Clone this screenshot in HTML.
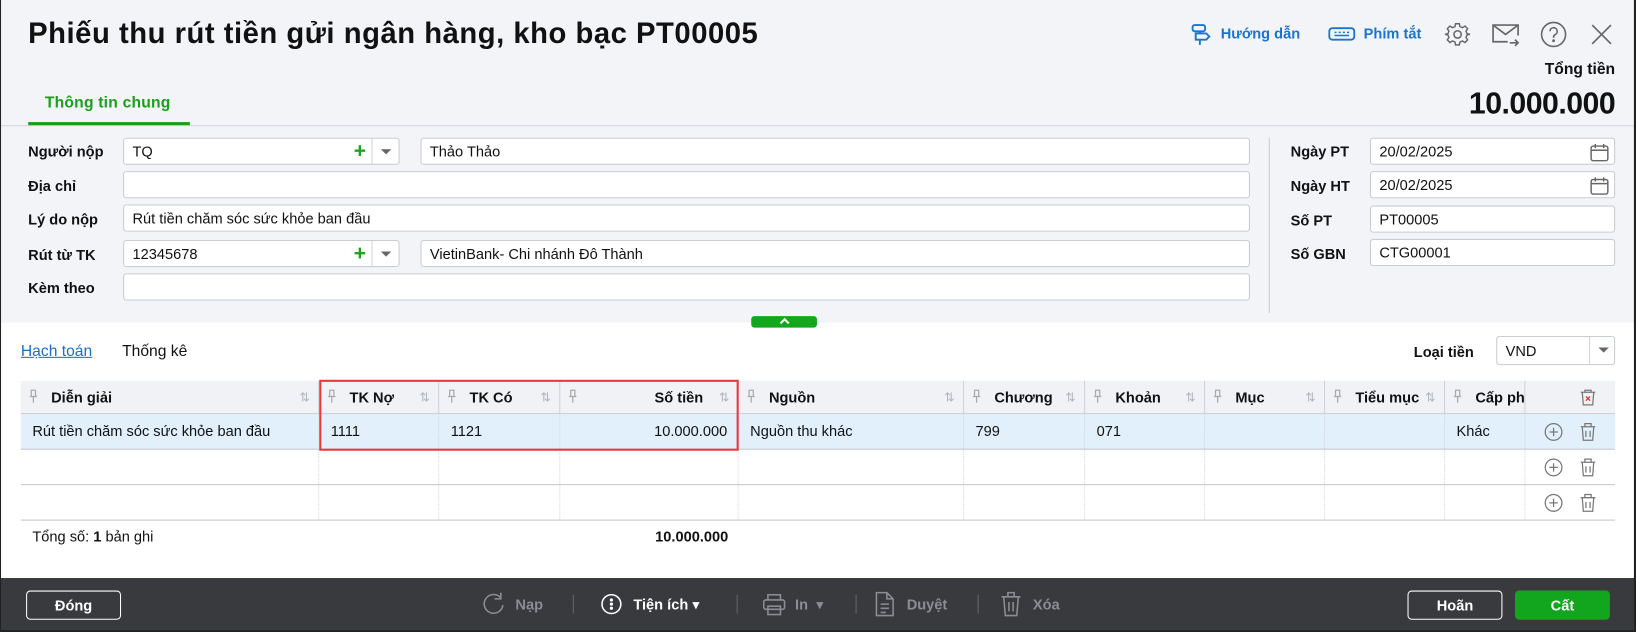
<!DOCTYPE html>
<html><head><meta charset="utf-8">
<style>
*{box-sizing:border-box;margin:0;padding:0}
html,body{width:1636px;height:632px;overflow:hidden;background:#fff}
body{font-family:"Liberation Sans","DejaVu Sans",sans-serif;color:#111;}
#w{position:absolute;left:0;top:0;width:1568px;height:606px;transform:scale(1.04337);transform-origin:0 0;background:#fff;overflow:hidden}
.a{position:absolute}
.t14{font-size:14px}
.b{font-weight:bold}
.inp{position:absolute;background:#fff;border:1px solid #c9ccd3;border-radius:3px;height:26px;font-size:14px;line-height:24px;padding-left:8px;color:#111}
.lbl{position:absolute;font-size:14px;font-weight:bold;color:#111}
.plus{position:absolute;color:#1ea51e;font-size:20px;line-height:22px;font-weight:bold}
.dd{position:absolute;top:0;right:0;width:26px;height:24px;border-left:1px solid #d0d3da}
.dd:after{content:"";position:absolute;left:8px;top:10px;border:5px solid transparent;border-top:5px solid #666;border-bottom:0}
.th{position:absolute;top:0;height:32px;border-right:1px solid #cfd2d9;font-size:14px;font-weight:bold;line-height:32px}
.srt{position:absolute;right:8px;top:0;color:#b0b4bb;font-size:12px;font-weight:normal}
.row{position:absolute;left:20px;width:1528px;height:34px;border-bottom:1px solid #c6c8ce}
.cell{position:absolute;top:0;height:33px;border-right:1px dotted #d4d6db;font-size:14px;line-height:33px;padding-left:11px}
.ft{position:absolute;font-size:14px;color:#8b8d92;font-weight:bold}
</style></head><body>
<div id="w">
<div class="a" style="left:0;top:0;width:1568px;height:309px;background:#f3f4f8"></div>
<div class="a" style="left:0;top:120px;width:1568px;height:1px;background:#d3d5dc"></div>
<div class="a b" style="left:27px;top:16px;font-size:28px;color:#111;letter-spacing:0.5px;white-space:nowrap">Phiếu thu rút tiền gửi ngân hàng, kho bạc PT00005</div>

<svg class="a" style="left:1140px;top:22px" width="22" height="22" viewBox="0 0 22 22" fill="none" stroke="#1a73d1" stroke-width="1.8"><rect x="3" y="2" width="12" height="6" rx="2"/><path d="M6 10h10l3 3-3 3H6zM10 8v2M10 16v5"/></svg>
<div class="a b" style="left:1170px;top:24px;font-size:14px;color:#1a73d1">Hướng dẫn</div>
<svg class="a" style="left:1273px;top:24px" width="26" height="18" viewBox="0 0 26 18" fill="none" stroke="#1a73d1" stroke-width="1.8"><rect x="1" y="3" width="24" height="11" rx="3"/><path d="M6 7h2M10 7h2M14 7h2M18 7h2M6 10h14" stroke-width="1.4"/></svg>
<div class="a b" style="left:1307px;top:24px;font-size:14px;color:#1a73d1">Phím tắt</div>
<svg class="a" style="left:1384px;top:20px" width="26" height="26" viewBox="0 0 26 26" fill="none" stroke="#666" stroke-width="1.5"><path d="M11 2h4l.6 3 2.6 1.1 2.6-1.7 2.8 2.8-1.7 2.6L23 12.4l3 .6v0l-3 .6-1.1 2.6 1.7 2.6-2.8 2.8-2.6-1.7L15.6 21l-.6 3h-4l-.6-3-2.6-1.1-2.6 1.7-2.8-2.8 1.7-2.6L3 13.6 0 13l3-.6 1.1-2.6-1.7-2.6 2.8-2.8 2.6 1.7L10.4 5z" transform="scale(0.92) translate(1 1)"/><circle cx="13" cy="13" r="3.5"/></svg>
<svg class="a" style="left:1429px;top:21px" width="28" height="26" viewBox="0 0 28 26" fill="none" stroke="#666" stroke-width="1.6"><path d="M16 19H2V3h24v10"/><path d="M2 3l12 9 12-9"/><path d="M18 20h8M23 17l3 3-3 3"/></svg>
<svg class="a" style="left:1476px;top:20px" width="26" height="26" viewBox="0 0 26 26" fill="none" stroke="#666" stroke-width="1.5"><circle cx="13" cy="13" r="11.5"/><path d="M9.5 10a3.5 3.5 0 1 1 5 3.2c-1 .5-1.5 1.2-1.5 2.3v.8"/><circle cx="13" cy="19" r=".6" fill="#666"/></svg>
<svg class="a" style="left:1523px;top:21px" width="24" height="24" viewBox="0 0 24 24" stroke="#666" stroke-width="1.6"><path d="M3 3l18 18M21 3L3 21"/></svg>

<div class="a b" style="right:20px;top:58px;font-size:15px">Tổng tiền</div>
<div class="a b" style="right:20px;top:84px;font-size:29px;letter-spacing:-0.5px">10.000.000</div>

<div class="a b" style="left:43px;top:90px;font-size:15px;color:#18a018;letter-spacing:0.2px">Thông tin chung</div>
<div class="a" style="left:27px;top:117px;width:155px;height:3px;background:#18a018"></div>

<div class="lbl" style="left:27px;top:137px">Người nộp</div>
<div class="inp" style="left:118px;top:132px;width:265px">TQ<span class="plus" style="left:220px;top:1px">+</span><span class="dd"></span></div>
<div class="inp" style="left:403px;top:132px;width:795px">Thảo Thảo</div>
<div class="lbl" style="left:27px;top:170px">Địa chỉ</div>
<div class="inp" style="left:118px;top:164px;width:1080px"></div>
<div class="lbl" style="left:27px;top:202px">Lý do nộp</div>
<div class="inp" style="left:118px;top:196px;width:1080px">Rút tiền chăm sóc sức khỏe ban đầu</div>
<div class="lbl" style="left:27px;top:236px">Rút từ TK</div>
<div class="inp" style="left:118px;top:230px;width:265px">12345678<span class="plus" style="left:220px;top:1px">+</span><span class="dd"></span></div>
<div class="inp" style="left:403px;top:230px;width:795px">VietinBank- Chi nhánh Đô Thành</div>
<div class="lbl" style="left:27px;top:268px">Kèm theo</div>
<div class="inp" style="left:118px;top:262px;width:1080px"></div>
<div class="a" style="left:1216px;top:132px;width:1px;height:168px;background:#c9ccd3"></div>

<div class="lbl" style="left:1237px;top:137px">Ngày PT</div>
<div class="inp" style="left:1313px;top:132px;width:235px">20/02/2025</div>
<div class="lbl" style="left:1237px;top:170px">Ngày HT</div>
<div class="inp" style="left:1313px;top:164px;width:235px">20/02/2025</div>
<svg class="a" style="left:1523px;top:136px" width="20" height="20" viewBox="0 0 20 20" fill="none" stroke="#666" stroke-width="1.4"><rect x="2" y="4" width="16" height="14" rx="2"/><path d="M2 8h16M6 2v4M14 2v4"/></svg>
<svg class="a" style="left:1523px;top:168px" width="20" height="20" viewBox="0 0 20 20" fill="none" stroke="#666" stroke-width="1.4"><rect x="2" y="4" width="16" height="14" rx="2"/><path d="M2 8h16M6 2v4M14 2v4"/></svg>
<div class="lbl" style="left:1237px;top:203px">Số PT</div>
<div class="inp" style="left:1313px;top:197px;width:235px">PT00005</div>
<div class="lbl" style="left:1237px;top:235px">Số GBN</div>
<div class="inp" style="left:1313px;top:229px;width:235px">CTG00001</div>

<div class="a" style="left:720px;top:303px;width:63px;height:11px;background:#13a81c;border-radius:3px"></div>
<svg class="a" style="left:745px;top:303px" width="14" height="10" viewBox="0 0 14 10" fill="none" stroke="#fff" stroke-width="2"><path d="M3 7l4-4 4 4"/></svg>

<div class="a" style="left:20px;top:328px;font-size:15px;color:#1a6fc8;text-decoration:underline">Hạch toán</div>
<div class="a" style="left:117px;top:328px;font-size:15px;color:#111">Thống kê</div>
<div class="lbl" style="left:1355px;top:329px">Loại tiền</div>
<div class="inp" style="left:1434px;top:322px;width:114px;height:28px;line-height:26px">VND<span class="dd" style="width:24px;height:26px"></span></div>

<div class="a" style="left:20px;top:365px;width:1528px;height:32px;background:#f1f2f6;border-bottom:1px solid #c6c8ce">
<div class="th" style="left:0;width:286px;padding-left:29px">Diễn giải<span class="srt">⇅</span></div>
<div class="th" style="left:286px;width:115px;padding-left:29px">TK Nợ<span class="srt">⇅</span></div>
<div class="th" style="left:401px;width:116px;padding-left:29px">TK Có<span class="srt">⇅</span></div>
<div class="th" style="left:517px;width:171px;text-align:right;padding-right:33px">Số tiền<span class="srt">⇅</span></div>
<div class="th" style="left:688px;width:216px;padding-left:29px">Nguồn<span class="srt">⇅</span></div>
<div class="th" style="left:904px;width:116px;padding-left:29px">Chương<span class="srt">⇅</span></div>
<div class="th" style="left:1020px;width:115px;padding-left:29px">Khoản<span class="srt">⇅</span></div>
<div class="th" style="left:1135px;width:115px;padding-left:29px">Mục<span class="srt">⇅</span></div>
<div class="th" style="left:1250px;width:115px;padding-left:29px">Tiểu mục<span class="srt">⇅</span></div>
<div class="th" style="left:1365px;width:77px;padding-left:29px;overflow:hidden;white-space:nowrap">Cấp ph</div>
</div>
<svg class="a" style="left:28px;top:373px" width="8" height="14" viewBox="0 0 8 14" fill="none" stroke="#aaa" stroke-width="1.2"><path d="M1.5 1h5M2 1v6h4V1M0.5 7h7M4 7v6"/></svg>
<svg class="a" style="left:314px;top:373px" width="8" height="14" viewBox="0 0 8 14" fill="none" stroke="#aaa" stroke-width="1.2"><path d="M1.5 1h5M2 1v6h4V1M0.5 7h7M4 7v6"/></svg>
<svg class="a" style="left:429px;top:373px" width="8" height="14" viewBox="0 0 8 14" fill="none" stroke="#aaa" stroke-width="1.2"><path d="M1.5 1h5M2 1v6h4V1M0.5 7h7M4 7v6"/></svg>
<svg class="a" style="left:545px;top:373px" width="8" height="14" viewBox="0 0 8 14" fill="none" stroke="#aaa" stroke-width="1.2"><path d="M1.5 1h5M2 1v6h4V1M0.5 7h7M4 7v6"/></svg>
<svg class="a" style="left:716px;top:373px" width="8" height="14" viewBox="0 0 8 14" fill="none" stroke="#aaa" stroke-width="1.2"><path d="M1.5 1h5M2 1v6h4V1M0.5 7h7M4 7v6"/></svg>
<svg class="a" style="left:932px;top:373px" width="8" height="14" viewBox="0 0 8 14" fill="none" stroke="#aaa" stroke-width="1.2"><path d="M1.5 1h5M2 1v6h4V1M0.5 7h7M4 7v6"/></svg>
<svg class="a" style="left:1048px;top:373px" width="8" height="14" viewBox="0 0 8 14" fill="none" stroke="#aaa" stroke-width="1.2"><path d="M1.5 1h5M2 1v6h4V1M0.5 7h7M4 7v6"/></svg>
<svg class="a" style="left:1163px;top:373px" width="8" height="14" viewBox="0 0 8 14" fill="none" stroke="#aaa" stroke-width="1.2"><path d="M1.5 1h5M2 1v6h4V1M0.5 7h7M4 7v6"/></svg>
<svg class="a" style="left:1278px;top:373px" width="8" height="14" viewBox="0 0 8 14" fill="none" stroke="#aaa" stroke-width="1.2"><path d="M1.5 1h5M2 1v6h4V1M0.5 7h7M4 7v6"/></svg>
<svg class="a" style="left:1393px;top:373px" width="8" height="14" viewBox="0 0 8 14" fill="none" stroke="#aaa" stroke-width="1.2"><path d="M1.5 1h5M2 1v6h4V1M0.5 7h7M4 7v6"/></svg>
<svg class="a" style="left:1513px;top:372px" width="18" height="18" viewBox="0 0 18 18" fill="none" stroke="#777" stroke-width="1.2"><path d="M2 4h14M6 4V2h6v2M3.5 4l1 12h9l1-12"/><path d="M7 8l4 4M11 8l-4 4" stroke="#e03030"/></svg>

<div class="row" style="top:397px;background:#e2f0fc">
<div class="cell" style="left:0;width:286px">Rút tiền chăm sóc sức khỏe ban đầu</div>
<div class="cell" style="left:286px;width:115px">1111</div>
<div class="cell" style="left:401px;width:116px">1121</div>
<div class="cell" style="left:517px;width:171px;text-align:right;padding-right:10px">10.000.000</div>
<div class="cell" style="left:688px;width:216px">Nguồn thu khác</div>
<div class="cell" style="left:904px;width:116px">799</div>
<div class="cell" style="left:1020px;width:115px">071</div>
<div class="cell" style="left:1135px;width:115px"></div>
<div class="cell" style="left:1250px;width:115px"></div>
<div class="cell" style="left:1365px;width:77px">Khác</div>
</div>
<div class="row" style="top:431px">
<div class="cell" style="left:0;width:286px"></div><div class="cell" style="left:286px;width:115px"></div><div class="cell" style="left:401px;width:116px"></div><div class="cell" style="left:517px;width:171px"></div><div class="cell" style="left:688px;width:216px"></div><div class="cell" style="left:904px;width:116px"></div><div class="cell" style="left:1020px;width:115px"></div><div class="cell" style="left:1135px;width:115px"></div><div class="cell" style="left:1250px;width:115px"></div><div class="cell" style="left:1365px;width:77px"></div>
</div>
<div class="row" style="top:465px">
<div class="cell" style="left:0;width:286px"></div><div class="cell" style="left:286px;width:115px"></div><div class="cell" style="left:401px;width:116px"></div><div class="cell" style="left:517px;width:171px"></div><div class="cell" style="left:688px;width:216px"></div><div class="cell" style="left:904px;width:116px"></div><div class="cell" style="left:1020px;width:115px"></div><div class="cell" style="left:1135px;width:115px"></div><div class="cell" style="left:1250px;width:115px"></div><div class="cell" style="left:1365px;width:77px"></div>
</div>
<svg class="a" style="left:1480px;top:405px" width="18" height="18" viewBox="0 0 18 18" fill="none" stroke="#777" stroke-width="1.2"><circle cx="9" cy="9" r="8"/><path d="M9 5v8M5 9h8"/></svg>
<svg class="a" style="left:1513px;top:404px" width="18" height="20" viewBox="0 0 18 20" fill="none" stroke="#777" stroke-width="1.2"><path d="M2 5h14M6 5V2h6v3M3.5 5l1 13h9l1-13M7 9v6M11 9v6"/></svg>
<svg class="a" style="left:1480px;top:439px" width="18" height="18" viewBox="0 0 18 18" fill="none" stroke="#777" stroke-width="1.2"><circle cx="9" cy="9" r="8"/><path d="M9 5v8M5 9h8"/></svg>
<svg class="a" style="left:1513px;top:438px" width="18" height="20" viewBox="0 0 18 20" fill="none" stroke="#777" stroke-width="1.2"><path d="M2 5h14M6 5V2h6v3M3.5 5l1 13h9l1-13M7 9v6M11 9v6"/></svg>
<svg class="a" style="left:1480px;top:473px" width="18" height="18" viewBox="0 0 18 18" fill="none" stroke="#777" stroke-width="1.2"><circle cx="9" cy="9" r="8"/><path d="M9 5v8M5 9h8"/></svg>
<svg class="a" style="left:1513px;top:472px" width="18" height="20" viewBox="0 0 18 20" fill="none" stroke="#777" stroke-width="1.2"><path d="M2 5h14M6 5V2h6v3M3.5 5l1 13h9l1-13M7 9v6M11 9v6"/></svg>

<div class="a" style="left:306px;top:364px;width:402px;height:68px;border:2px solid #e8393f"></div>

<div class="a t14" style="left:31px;top:506px">Tổng số: <b>1</b> bản ghi</div>
<div class="a t14 b" style="left:560px;top:506px;width:138px;text-align:right">10.000.000</div>

<div class="a" style="left:0;top:554px;width:1568px;height:52px;background:#393a3e"></div>
<div class="a b" style="left:25px;top:566px;width:91px;height:28px;border:1px solid #fff;border-radius:4px;color:#fff;font-size:14px;text-align:center;line-height:26px">Đóng</div>
<svg class="a" style="left:461px;top:567px" width="24" height="26" viewBox="0 0 24 26" fill="none" stroke="#8b8d92" stroke-width="1.5"><path d="M19 6A9 9 0 1 0 21 13"/><path d="M19 1v6h-6"/></svg>
<div class="ft" style="left:494px;top:571px">Nạp</div>
<div class="a" style="left:549px;top:570px;width:1px;height:18px;background:#666"></div>
<svg class="a" style="left:576px;top:569px" width="20" height="20" viewBox="0 0 20 20" fill="none" stroke="#fff" stroke-width="1.5"><circle cx="10" cy="10" r="9"/><circle cx="10" cy="6" r=".8" fill="#fff"/><circle cx="10" cy="10" r=".8" fill="#fff"/><circle cx="10" cy="14" r=".8" fill="#fff"/></svg>
<div class="a b" style="left:607px;top:571px;font-size:14px;color:#fff">Tiện ích ▾</div>
<div class="a" style="left:706px;top:570px;width:1px;height:18px;background:#666"></div>
<svg class="a" style="left:731px;top:568px" width="22" height="22" viewBox="0 0 22 22" fill="none" stroke="#8b8d92" stroke-width="1.5"><path d="M5 7V2h12v5"/><rect x="1" y="7" width="20" height="9" rx="2"/><rect x="5" y="13" width="12" height="8"/></svg>
<div class="ft" style="left:762px;top:571px">In &nbsp;▾</div>
<div class="a" style="left:820px;top:570px;width:1px;height:18px;background:#666"></div>
<svg class="a" style="left:838px;top:567px" width="20" height="24" viewBox="0 0 20 24" fill="none" stroke="#8b8d92" stroke-width="1.5"><path d="M2 1h10l6 6v16H2z"/><path d="M12 1v6h6M6 12h8M6 16h8M6 20h5"/></svg>
<div class="ft" style="left:869px;top:571px">Duyệt</div>
<div class="a" style="left:937px;top:570px;width:1px;height:18px;background:#666"></div>
<svg class="a" style="left:958px;top:566px" width="22" height="26" viewBox="0 0 22 26" fill="none" stroke="#8b8d92" stroke-width="1.5"><path d="M2 6h18M8 6V2h6v4M4 6l1.5 18h11L18 6M9 11v9M13 11v9"/></svg>
<div class="ft" style="left:990px;top:571px">Xóa</div>
<div class="a b" style="left:1349px;top:566px;width:91px;height:28px;border:1px solid #fff;border-radius:4px;color:#fff;font-size:14px;text-align:center;line-height:26px">Hoãn</div>
<div class="a b" style="left:1452px;top:566px;width:91px;height:28px;background:#12a51e;border-radius:4px;color:#fff;font-size:14px;text-align:center;line-height:28px">Cất</div>

<div class="a" style="left:0;top:0;width:1px;height:606px;background:#222"></div>
<div class="a" style="right:0;top:0;width:2px;height:606px;background:#222"></div>
<div class="a" style="left:0;bottom:0;width:1568px;height:2px;background:#222"></div>
</div>
</body></html>
